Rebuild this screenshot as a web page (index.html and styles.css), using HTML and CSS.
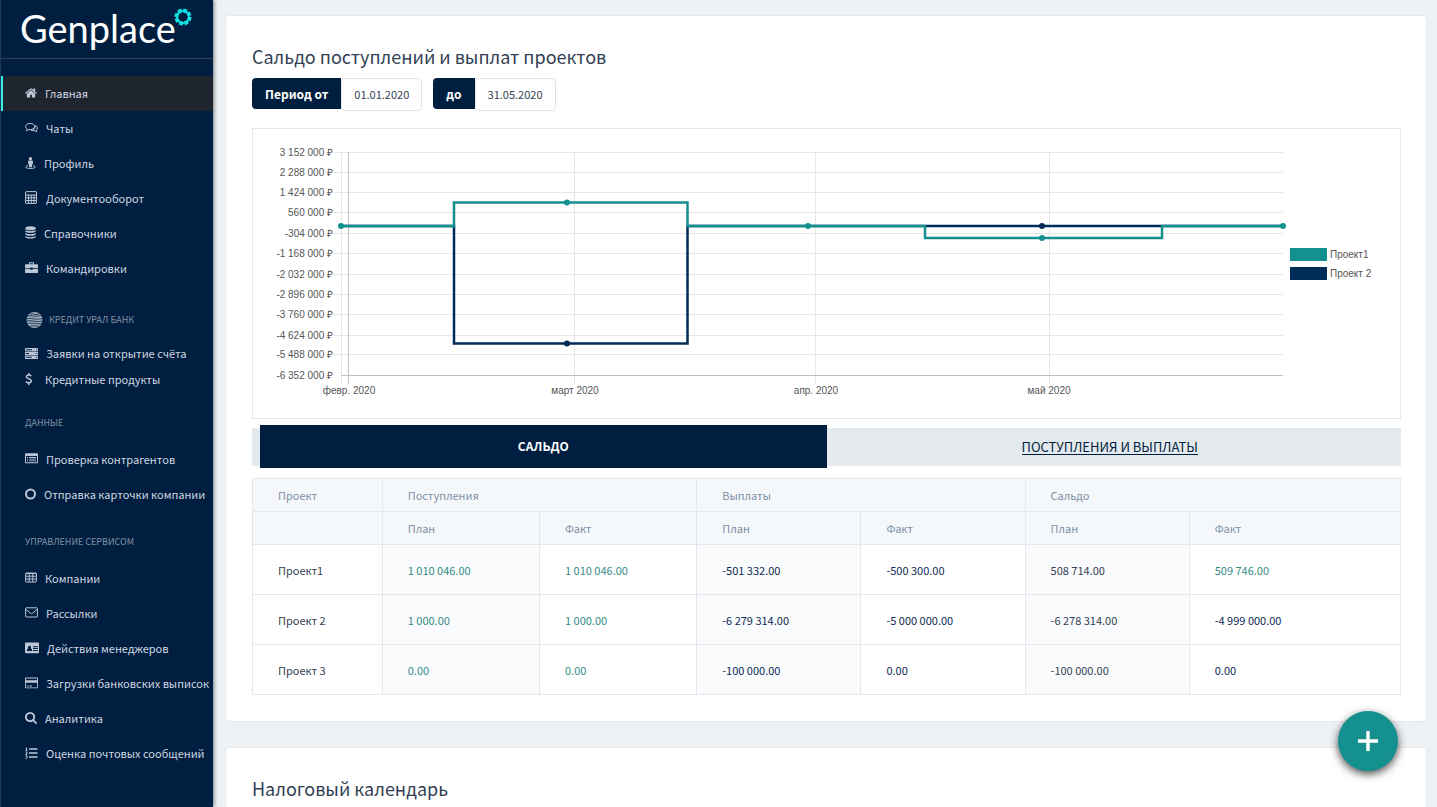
FILE: index.html
```html
<!DOCTYPE html>
<html lang="ru">
<head>
<meta charset="utf-8">
<title>Genplace</title>
<link rel="stylesheet" href="styles.css">
</head>
<body>
<div class="app">
  <aside class="sidebar">
    <a class="logo" href="#"><span class="logo-text">Genplace</span><svg class="logo-ring" viewBox="0 0 18 18" width="18" height="18"><circle cx="9" cy="9" r="6" fill="none" stroke="#12dfe4" stroke-width="2"/><circle cx="9" cy="9" r="6.600" fill="none" stroke="#12dfe4" stroke-width="4" stroke-dasharray="3.600 1.584"/></svg></a>
    <nav class="nav">
      <a class="item active" href="#"><svg width="12" height="12" viewBox="64 128 1664 1536"><path d="M1472 992v480q0 26-19 45t-45 19h-384v-384h-256v384h-384q-26 0-45-19t-19-45v-480q0-1 .5-3t.5-3l575-474 575 474q1 2 1 6zm223-69l-62 74q-8 9-21 11h-3q-13 0-21-7l-692-577-692 577q-12 8-24 7-13-2-21-11l-62-74q-8-10-7-23.500t11-21.500l719-599q32-26 76-26t76 26l244 204v-195q0-14 9-23t23-9h192q14 0 23 9t9 23v408l219 182q10 8 11 21.500t-7 23.500z"/></svg>Главная</a>
      <a class="item" href="#"><svg class="line" width="13" height="12" viewBox="0 0 13 12"><path d="M5 1.500C2.400 1.500.6 2.800.6 4.600c0 1 .6 1.900 1.600 2.500L1.500 8.800l2.200-1.200c3.200.5 5.900-1 5.900-3C9.600 2.800 7.600 1.500 5 1.500zM10.600 3.600c1.200.5 1.900 1.300 1.900 2.300 0 1-.6 1.700-1.400 2.200l.7 1.700-2.200-1.200c-1.500.2-2.700 0-3.600-.5 2.200-.2 4.600-1.800 4.600-4.500z"/></svg>Чаты</a>
      <a class="item" href="#"><svg width="11" height="12" viewBox="0 0 11 12"><circle cx="5.500" cy="1.700" r="1.700"/><path d="M4 3.400h3c.6 0 .9.400.9.900v3H7v2.900H4V7.300h-.9v-3c0-.5.300-.9.9-.9z"/><path class="stroke" d="M3 8.500c-3.200.6-3.300 3 2.500 3s5.700-2.400 2.500-3"/></svg>Профиль</a>
      <a class="item" href="#"><svg class="line" width="13" height="13" viewBox="0 0 13 13"><path d="M1.500.6h9.600l.4.400v11l-.4.400H1l-.4-.4V1zM1 4h10.500M1 6.800h10.500M1 9.500h10.500M3.500 4v8.400M6.200 4v8.400M9 4v8.400"/></svg>Документооборот</a>
      <a class="item" href="#"><svg width="11" height="13" viewBox="0 0 11 13"><ellipse cx="5.500" cy="2.200" rx="5.200" ry="2"/><path d="M.3 4c2 1.600 8.400 1.600 10.400 0v1.300c-1 2-9.400 2-10.400 0zM.3 7c2 1.600 8.400 1.600 10.400 0v1.300c-1 2-9.400 2-10.400 0zM.3 10c2 1.600 8.400 1.600 10.400 0v1.100c-1 2-9.400 2-10.400 0z"/></svg>Справочники</a>
      <a class="item" href="#"><svg width="13" height="12" viewBox="0 0 13 12"><path d="M4 2.300V1c0-.5.300-.8.8-.8h3.400c.5 0 .8.300.8.800v1.300h3c.5 0 1 .5 1 1v3H7.700V5.500H5.300v.8H0v-3c0-.5.500-1 1-1zm1 0h3V1.200H5zM0 7h5.300v.8h2.400V7H13v3.200c0 .5-.5.900-1 .9H1c-.5 0-1-.4-1-.9z"/></svg>Командировки</a>
      <h2 class="section bank"><svg width="17" height="16" viewBox="0 0 17 16"><circle cx="8.500" cy="8" r="8" fill="#9fadbd"/><g fill="none" stroke="#001f40" stroke-width=".8"><path d="M1 4.500c4-2 6 1 14-1M.500 7c5-2 7 1.500 16-.500M.500 9.200c5-1.700 8 1.600 16-.2M1.500 11.500c5-1.500 7 1.500 14-.2M4 14c3-1 5 .8 9 0M4 2.300c3-.8 5 .6 9 0"/></g></svg>КРЕДИТ УРАЛ БАНК</h2>
      <a class="item tight" href="#"><svg width="13" height="11" viewBox="0 0 13 11"><path fill-rule="evenodd" d="M.5 0h12l.5.500v2.300l-.5.500H.5L0 2.800V.5zM1 1.200v1h6v-1zm10 0v1h1v-1zM.5 3.800h12l.5.500v2.300l-.5.500H.5L0 6.600V4.300zM1 5v1h3V5zm9.500 0v1h1V5zM.5 7.600h12l.5.500v2.300l-.5.500H.5l-.5-.5V8.100zM1 8.800v1h6v-1zm10 0v1h1v-1z"/></svg>Заявки на открытие счёта</a>
      <a class="item tight" href="#"><svg class="line dollar" width="12" height="12" viewBox="0 0 12 12"><path d="M6.200 3.100C5 1.500 1.400 1.700 1.400 3.800c0 2.400 4.900 1.500 4.900 4.100 0 2.200-3.900 2.500-5.300.6M3.800 0v2.200M3.800 9.700V12"/></svg>Кредитные продукты</a>
      <h2 class="section">ДАННЫЕ</h2>
      <a class="item" href="#"><svg width="13" height="11" viewBox="0 0 13 11"><path fill-rule="evenodd" d="M1 .3h11c.5 0 1 .4 1 1v8c0 .600-.5 1-1 1H1c-.5 0-1-.4-1-1v-8c0-.6.500-1 1-1zm0 2.600v6.400h11V2.900zM2 4h1v.900H2zm2 0h7v.9H4zM2 5.700h1v.9H2zm2 0h7v.9H4zM2 7.400h1v.9H2zm2 0h7v.9H4z"/></svg>Проверка контрагентов</a>
      <a class="item" href="#"><svg class="line bold" width="11" height="12" viewBox="0 0 11 12"><circle cx="5.500" cy="6" r="4.500"/></svg>Отправка карточки компании</a>
      <h2 class="section">УПРАВЛЕНИЕ СЕРВИСОМ</h2>
      <a class="item" href="#"><svg class="line" width="12" height="11" viewBox="0 0 12 11"><path d="M1 1h10l.4.400v8.200l-.4.400H1l-.4-.4V1.400zM.6 1.500h10.800M.6 4.200h10.800M.6 7h10.800M4.200 1v9M7.800 1v9"/></svg>Компании</a>
      <a class="item" href="#"><svg class="line" width="13" height="11" viewBox="0 0 13 11"><path d="M1.100.8h10.800l.5.500v8.200l-.5.500H1.100l-.5-.5V1.300zM.8 2.300l4.500 3.800c.8.700 1.600.7 2.400 0l4.500-3.800"/></svg>Рассылки</a>
      <a class="item" href="#"><svg width="14" height="12" viewBox="0 0 14 12"><path fill-rule="evenodd" d="M1 .5h12c.6 0 1 .4 1 1v8.800c0 .500-.4 1-1 1H1c-.6 0-1-.5-1-1V1.500c0-.6.400-1 1-1zM2 9h5V7.700c0-.8-.5-1.200-1.300-1.300.7-1 .3-2.600-1.200-2.600S2.600 5.400 3.300 6.400C2.500 6.500 2 6.900 2 7.700zm6-4.800v1h4.800v-1zM8 6v1h4.800V6zm0 1.900V9h4.800V7.900z"/></svg>Действия менеджеров</a>
      <a class="item" href="#"><svg width="13" height="12" viewBox="0 0 13 12"><path fill-rule="evenodd" d="M1 .5h11c.6 0 1 .4 1 1v8.800c0 .500-.4 1-1 1H1c-.6 0-1-.5-1-1V1.500c0-.6.400-1 1-1zm-.1.900v1.800h11.200V1.400zm0 4.300v4.700h11.200V5.700zM2 8.500h1.500v.9H2zm2.500 0H7v.9H4.500z"/></svg>Загрузки банковских выписок</a>
      <a class="item" href="#"><svg width="12" height="12" viewBox="64 128 1664 1664"><path d="M1216 832q0-185-131.500-316.500t-316.500-131.500-316.500 131.500-131.500 316.500 131.500 316.500 316.500 131.500 316.500-131.500 131.500-316.500zm512 832q0 52-38 90t-90 38q-54 0-90-38l-343-342q-179 124-399 124-143 0-273.500-55.500t-225-150-150-225-55.500-273.500 55.500-273.500 150-225 225-150 273.500-55.500 273.500 55.500 225 150 150 225 55.500 273.500q0 220-124 399l343 343q37 37 37 90z"/></svg>Аналитика</a>
      <a class="item" href="#"><svg width="13" height="12" viewBox="0 0 13 12"><path d="M4 1.200h8.500v1.500H4zM4 5.200h8.500v1.500H4zM4 9.200h8.500v1.500H4z"/><path class="stroke" d="M.8.900h.7v2.400M.5 3.300h2M.6 5h1.500v.8L.6 7.400h1.800M.5 9h1.800l-.9 1c1.400.2.900 1.700-.9 1.400"/></svg>Оценка почтовых сообщений</a>
    </nav>
  </aside>
  <main class="main">
    <section class="card">
      <h1 class="title">Сальдо поступлений и выплат проектов</h1>
      <form class="period">
        <div class="field"><label for="from">Период от</label><input id="from" type="text" value="01.01.2020"></div>
        <div class="field"><label for="to">до</label><input id="to" type="text" value="31.05.2020"></div>
      </form>
      <div class="chart">
        <svg viewBox="0 0 1147 289" role="img" aria-label="Сальдо по проектам">
          <g class="grid">
            <path d="M80 23.500h950M80 43.500h950M80 63.500h950M80 83.500h950M80 104.500h950M80 124.500h950M80 145.500h950M80 165.500h950M80 185.500h950M80 206.500h950M80 225.500h950M88.500 23v232M321.500 23v232M562.500 23v232M796.500 23v232"/>
            <path class="axis" d="M95.500 23v232M88 246.500h942"/>
          </g>
          <g class="ylabels">
            <text x="80" y="27">3 152 000 ₽</text><text x="80" y="47">2 288 000 ₽</text><text x="80" y="67">1 424 000 ₽</text><text x="80" y="87">560 000 ₽</text><text x="80" y="108">-304 000 ₽</text><text x="80" y="128">-1 168 000 ₽</text><text x="80" y="149">-2 032 000 ₽</text><text x="80" y="169">-2 896 000 ₽</text><text x="80" y="189">-3 760 000 ₽</text><text x="80" y="210">-4 624 000 ₽</text><text x="80" y="229">-5 488 000 ₽</text><text x="80" y="250">-6 352 000 ₽</text>
          </g>
          <g class="xlabels">
            <text x="96" y="265">февр. 2020</text><text x="322" y="265">март 2020</text><text x="563" y="265">апр. 2020</text><text x="796" y="265">май 2020</text>
          </g>
          <path class="series navy" d="M88 97H201V214.500H434.500V97H1030"/>
          <g class="dots navy"><circle cx="314" cy="214.500" r="3"/><circle cx="789" cy="97" r="3"/></g>
          <path class="series teal" d="M88 97H201V73.500H434.500V97H672V109H909V97H1030"/>
          <g class="dots teal"><circle cx="88" cy="97" r="3"/><circle cx="314" cy="73.500" r="3"/><circle cx="555" cy="97" r="3"/><circle cx="789" cy="109" r="3"/><circle cx="1030" cy="97" r="3"/></g>
          <rect x="1037" y="119" width="37" height="13" fill="#14918f"/><rect x="1037" y="138" width="37" height="13" fill="#002c5a"/>
          <g class="legend"><text x="1077" y="129">Проект1</text><text x="1077" y="148">Проект 2</text></g>
        </svg>
      </div>
      <div class="tabs">
        <button class="tab selected" type="button">САЛЬДО</button>
        <button class="tab" type="button"><span>ПОСТУПЛЕНИЯ И ВЫПЛАТЫ</span></button>
      </div>
      <table class="table">
        <colgroup><col class="c-name"><col class="c-in"><col class="c-in"><col class="c-out"><col class="c-out"><col class="c-out"><col></colgroup>
        <thead>
          <tr><th>Проект</th><th colspan="2">Поступления</th><th colspan="2">Выплаты</th><th colspan="2">Сальдо</th></tr>
          <tr><th></th><th>План</th><th>Факт</th><th>План</th><th>Факт</th><th>План</th><th>Факт</th></tr>
        </thead>
        <tbody>
          <tr><td>Проект1</td><td class="plan in">1 010 046.00</td><td class="in">1 010 046.00</td><td class="plan out">-501 332.00</td><td class="out">-500 300.00</td><td class="plan">508 714.00</td><td class="in">509 746.00</td></tr>
          <tr><td>Проект 2</td><td class="plan in">1 000.00</td><td class="in">1 000.00</td><td class="plan out">-6 279 314.00</td><td class="out">-5 000 000.00</td><td class="plan">-6 278 314.00</td><td class="out">-4 999 000.00</td></tr>
          <tr><td>Проект 3</td><td class="plan in">0.00</td><td class="in">0.00</td><td class="plan out">-100 000.00</td><td class="out">0.00</td><td class="plan">-100 000.00</td><td class="out">0.00</td></tr>
        </tbody>
      </table>
    </section>
    <section class="card">
      <h1 class="title">Налоговый календарь</h1>
    </section>
  </main>
  <button class="fab" type="button" aria-label="Добавить"><svg width="20" height="20" viewBox="0 0 20 20"><path d="M10 0v20M0 10h20" stroke="#fff" stroke-width="3.400"/></svg></button>
</div>
</body>
</html>
```

FILE: styles.css
```css
* { box-sizing: border-box; }
body {
  margin: 0;
  background: #eef2f5;
  color: #333f54;
  font-family: "Noto Sans CJK SC", "Noto Sans", sans-serif;
  font-size: 11px;
}
a { color: inherit; text-decoration: none; }
button, input { font: inherit; }

.app { display: flex; height: 100vh; }

.sidebar {
  flex: 0 0 213px;
  background: #001f40;
  border-left: 1px solid #1c3854;
  box-shadow: 1px 0 4px rgba(0, 0, 0, .5);
  color: #d0d7e0;
  overflow: hidden;
}
.logo {
  display: flex;
  align-items: flex-start;
  height: 59px;
  padding: 8px 0 0 19px;
  border-bottom: 1px solid #33404f;
  color: #fff;
}
.logo-text { font: 38px/40px Lato, sans-serif; }
.logo-ring { margin-left: -2px; }
.nav { padding-top: 17px; }
.item {
  display: flex;
  align-items: center;
  gap: 8px;
  height: 35px;
  padding: 0 0 2px 24px;
  white-space: nowrap;
}
.item.tight { height: 26px; }
.item.active {
  background: #1f252f;
  border-left: 3px solid #35eee8;
  margin-left: -1px;
  padding-left: 22px;
}
.item svg { flex: none; fill: #bcc6d6; }
.item svg.line, .item .stroke { fill: none; stroke: #bcc6d6; stroke-width: 1; }
.item svg.bold { stroke-width: 2; }
.item svg.dollar { stroke-width: 1.500; }
.section {
  display: flex;
  align-items: center;
  gap: 6px;
  height: 49px;
  margin: 0;
  padding: 10px 0 0 24px;
  color: #8090a4;
  font-size: 9px;
  font-weight: 400;
}
.section.bank { height: 55px; padding: 12px 0 0 25px; }

.main {
  flex: 1;
  min-width: 0;
  padding: 15px 10px 0 12px;
  overflow-y: auto;
  scrollbar-width: none;
}
.card {
  margin-bottom: 25px;
  padding: 26px 25px 26px 26px;
  background: #fff;
  border: 1px solid #e4e8ed;
  border-radius: 4px;
}
.title {
  margin: 0 0 8px;
  font-size: 18px;
  font-weight: 400;
  line-height: 28px;
}
.period { display: flex; gap: 11px; margin-bottom: 17px; }
.field { display: flex; align-items: flex-start; }
.field label {
  height: 31px;
  padding: 0 13px;
  background: #001f40;
  border-radius: 4px 0 0 4px;
  color: #fff;
  font-size: 12px;
  font-weight: 700;
  line-height: 31px;
}
.field input {
  width: 81px;
  height: 33px;
  padding: 0 12px 2px;
  border: 1px solid #dfe3ec;
  border-radius: 4px;
  background: #fff;
  color: #333f54;
}

.chart { border: 1px solid #e4e8ed; }
.chart svg { display: block; width: 100%; height: auto; }
.chart text { font: 10px "Liberation Sans", Arial, sans-serif; fill: #555; }
.ylabels text { text-anchor: end; }
.xlabels text { text-anchor: middle; }
.grid path { fill: none; stroke: #e6e6e6; }
.grid .axis { stroke: #c0c0c0; }
.series { fill: none; stroke-width: 2.500; }
.series.navy { stroke: #002c5a; }
.series.teal { stroke: #14918f; }
.dots.navy { fill: #002c5a; }
.dots.teal { fill: #14918f; }

.tabs {
  display: flex;
  height: 38px;
  margin: 9px 0 12px;
  padding: 0 8px;
  background: #e4e9ed;
}
.tab {
  flex: 1;
  padding: 0;
  border: 0;
  background: none;
  color: #001f40;
  font-size: 13px;
  line-height: 20px;
}
.tab span { display: inline-block; line-height: 15px; border-bottom: 1px solid #001f40; }
.tab.selected {
  margin: -3px 0 -2px;
  padding-bottom: 2px;
  background: #001f40;
  color: #fff;
  font-size: 12px;
  font-weight: 700;
}

.table { width: 100%; border-collapse: collapse; table-layout: fixed; }
.table th, .table td {
  padding: 0 25px;
  border: 1px solid #e4e8ed;
  line-height: 16px;
  text-align: left;
  white-space: nowrap;
}
.table th { height: 33px; background: #f4f8fb; color: #7f8fa4; font-weight: 400; }
.table td { height: 50px; }
.table .plan { background: #fafbfd; }
.table .in { color: #348c87; }
.table .out { color: #0e2a54; }
.c-name { width: 11.300%; }
.c-in { width: 13.700%; }
.c-out { width: 14.300%; }

.fab {
  position: fixed;
  right: 39px;
  bottom: 36px;
  display: grid;
  place-items: center;
  width: 60px;
  height: 60px;
  padding: 0;
  border: 0;
  border-radius: 50%;
  background: #14918f;
  box-shadow: 0 3px 8px rgba(0, 0, 0, .7);
}
```
